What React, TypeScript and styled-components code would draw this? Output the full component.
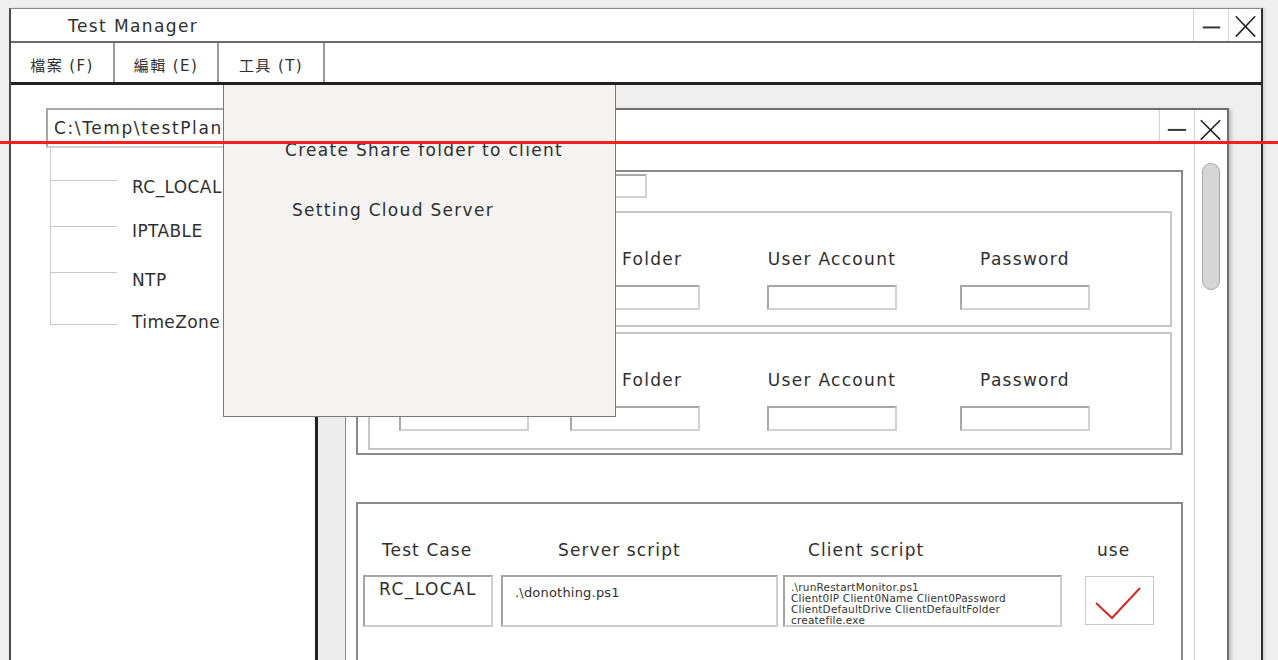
import React from "react";
import styled, { createGlobalStyle } from "styled-components";

const GlobalStyle = createGlobalStyle`
  html, body { margin: 0; padding: 0; background: #efefef; }
  body {
    font-family: "DejaVu Sans", "Noto Sans CJK TC", sans-serif;
    color: #2f2f2f;
  }
  * { box-sizing: border-box; }
`;

const Page = styled.div`
  position: relative;
  width: 1278px;
  height: 660px;
  overflow: hidden;
  padding: 8px 15px 0 9px;
  background: #efefef;
`;

const Window = styled.div`
  display: flex;
  flex-direction: column;
  width: 1254px;
  height: 720px;
  background: #fff;
  border-left: 2px solid #4a4a4a;
  border-right: 2px solid #2e2e2e;
  border-top: 1px solid #8a8a8a;
  box-shadow: 2px 0 3px rgba(0, 0, 0, 0.12);
`;

const TitleBar = styled.div`
  display: flex;
  align-items: stretch;
  height: 34px;
  flex: none;
  border-bottom: 2px solid #6a6a6a;
`;

const Title = styled.div`
  flex: 1;
  display: flex;
  align-items: center;
  padding: 1px 0 0 57px;
  font-size: 17px;
  letter-spacing: 1.4px;
`;

const WinButton = styled.div<{ $w: number }>`
  width: ${(p) => p.$w}px;
  flex: none;
  display: flex;
  border-left: 1px solid #d4d4d4;
  svg { display: block; }
`;

const MenuBar = styled.div`
  display: flex;
  height: 42px;
  flex: none;
  border-bottom: 3px solid #222;
`;

const MenuItem = styled.div<{ $w: number }>`
  width: ${(p) => p.$w}px;
  display: flex;
  align-items: center;
  justify-content: center;
  padding-top: 4px;
  border-right: 2px solid #9a9a9a;
  font-size: 15px;
  letter-spacing: 1.4px;
  white-space: nowrap;
`;

const WindowBody = styled.div`
  flex: 1;
  display: flex;
  min-height: 0;
`;

const LeftPanel = styled.div`
  width: 305px;
  flex: none;
  background: #fff;
  padding: 23px 0 0 35px;
  display: flex;
  flex-direction: column;
`;

const Workspace = styled.div`
  flex: 1;
  background: #efefef;
`;

const PathField = styled.div`
  width: 300px;
  height: 40px;
  border: 2px solid;
  border-color: #a8a8a8 #d0d0d0 #d0d0d0 #a8a8a8;
  padding-left: 6px;
  display: flex;
  align-items: center;
  font-size: 17px;
  letter-spacing: 1.6px;
  white-space: nowrap;
  overflow: hidden;
`;

const Tree = styled.div`
  margin-left: 4px;
  display: flex;
  flex-direction: column;
`;

const TreeLead = styled.div`
  height: 12px;
  border-left: 1px solid #c8c8c8;
`;

const TreeItem = styled.div<{ $top: number; $bottom: number }>`
  display: grid;
  grid-template-columns: 67px auto;
  grid-template-rows: ${(p) => p.$top}px ${(p) => p.$bottom}px;
`;

const StubTop = styled.div`
  grid-row: 1;
  grid-column: 1;
  border-left: 1px solid #c8c8c8;
  border-bottom: 1px solid #c8c8c8;
`;

const StubBottom = styled.div<{ $last?: boolean }>`
  grid-row: 2;
  grid-column: 1;
  border-left: ${(p) => (p.$last ? "none" : "1px solid #c8c8c8")};
`;

const TreeLabel = styled.div<{ $nudge: number }>`
  grid-row: 1 / 3;
  grid-column: 2;
  align-self: start;
  margin-top: ${(p) => p.$nudge}px;
  padding-left: 15px;
  line-height: 20px;
  font-size: 17px;
  letter-spacing: 0.4px;
  white-space: nowrap;
`;

/* ---------- dialog window ---------- */

const Dialog = styled.div`
  position: absolute;
  left: 315px;
  top: 108px;
  width: 914px;
  height: 600px;
  display: flex;
  flex-direction: column;
  background: #fff;
  border-left: 3px solid #222;
  border-top: 2px solid #6e6e6e;
  border-right: 2px solid #6e6e6e;
  box-shadow: 2px 2px 4px rgba(0, 0, 0, 0.25);
`;

const DialogTitle = styled.div`
  display: flex;
  height: 34px;
  flex: none;
  border-bottom: 1px solid #bbb;
`;

const DialogTitleText = styled.div`
  flex: 1;
  display: flex;
  align-items: center;
  padding-left: 20px;
  font-size: 17px;
  letter-spacing: 1.1px;
`;

const DialogBody = styled.div`
  flex: 1;
  display: flex;
  min-height: 0;
`;

const SideStrip = styled.div`
  width: 28px;
  flex: none;
  background: #ececec;
  border-right: 1px solid #8c8c8c;
`;

const Content = styled.div`
  flex: 1;
  padding: 26px 11px 0 10px;
  display: flex;
  flex-direction: column;
`;

const ScrollTrack = styled.div`
  width: 33px;
  flex: none;
  border-left: 1px solid #cfcfcf;
  display: flex;
  justify-content: center;
  padding-top: 19px;
`;

const ScrollThumb = styled.div`
  width: 18px;
  height: 127px;
  border-radius: 9px;
  background: #d6d6d6;
  border: 1.5px solid #a8a8a8;
`;

const GroupBox = styled.div`
  border: 2px solid #8a8a8a;
  padding: 2px 9px 3px 10px;
  display: flex;
  flex-direction: column;
  gap: 5px;
`;

const TopRow = styled.div`
  display: flex;
  align-items: center;
  gap: 12px;
  padding-left: 31px;
  margin-bottom: 8px;
`;

const TopLabel = styled.div`
  width: 106px;
  font-size: 17px;
  letter-spacing: 1.2px;
  white-space: nowrap;
`;

const Field = styled.div<{ $w: number; $h: number }>`
  width: ${(p) => p.$w}px;
  height: ${(p) => p.$h}px;
  flex: none;
  background: #fff;
  border: 2px solid;
  border-color: #a8a8a8 #d2d2d2 #d2d2d2 #a8a8a8;
`;

const SubBox = styled.div<{ $bottom: number }>`
  border: 2px solid #c6c6c6;
  padding: 36px 0 ${(p) => p.$bottom}px 29px;
  display: grid;
  grid-template-columns: 171px 197px 193px 131px;
  grid-template-rows: 20px 25px;
  row-gap: 16px;
`;

const ColLabel = styled.div<{ $offset?: number }>`
  width: 130px;
  display: flex;
  justify-content: ${(p) => (p.$offset !== undefined ? "flex-start" : "center")};
  padding-left: ${(p) => p.$offset ?? 0}px;
  align-items: center;
  font-size: 17px;
  letter-spacing: 1.3px;
  white-space: nowrap;
`;

const CaseBox = styled.div`
  margin-top: 47px;
  flex: 1;
  border: 2px solid #8a8a8a;
  border-bottom: none;
  padding-top: 35px;
`;

const CaseHeader = styled.div`
  display: grid;
  grid-template-columns: 176px 250px 289px auto;
  padding-left: 24px;
  height: 22px;
  align-items: center;
  font-size: 17px;
  letter-spacing: 1.1px;
  white-space: nowrap;
`;

const CaseRow = styled.div`
  display: flex;
  align-items: flex-start;
  padding-left: 5px;
  margin-top: 14px;
`;

const CaseCell = styled.div<{ $w: number; $gap: number; $align?: string }>`
  width: ${(p) => p.$w}px;
  height: 52px;
  margin-right: ${(p) => p.$gap}px;
  flex: none;
  border: 2px solid;
  border-color: #a4a4a4 #cfcfcf #cfcfcf #a4a4a4;
  text-align: ${(p) => p.$align || "left"};
  white-space: nowrap;
  overflow: hidden;
`;

const CaseName = styled.div`
  font-size: 17px;
  letter-spacing: 1.4px;
  line-height: 20px;
  padding-top: 2px;
`;

const ScriptText = styled.div`
  font-size: 13px;
  letter-spacing: 0.2px;
  line-height: 16px;
  padding: 8px 0 0 12px;
`;

const ClientText = styled.div`
  font-size: 10.5px;
  letter-spacing: 0.2px;
  line-height: 11px;
  padding: 5px 0 0 6px;
  color: #333;
`;

const CheckBox = styled.div`
  width: 69px;
  height: 49px;
  flex: none;
  margin-top: 1px;
  border: 1px solid #c8c8c8;
  background: #fff;
  svg { display: block; }
`;

/* ---------- overlays ---------- */

const DropMenu = styled.div`
  position: absolute;
  left: 223px;
  top: 85px;
  width: 393px;
  height: 332px;
  background: #f4f3f2;
  border: 1px solid #7a7a7a;
  border-top: none;
  padding-top: 53px;
  display: flex;
  flex-direction: column;
  gap: 36px;
`;

const DropItem = styled.div<{ $indent: number }>`
  padding-left: ${(p) => p.$indent}px;
  font-size: 17px;
  line-height: 24px;
  letter-spacing: 1.3px;
  white-space: nowrap;
`;

const GuideLine = styled.div`
  position: absolute;
  left: 0;
  top: 141px;
  width: 100%;
  height: 3px;
  background: #ff1d1d;
`;

const MinIcon = ({ w, h, x1, x2, y }: { w: number; h: number; x1: number; x2: number; y: number }) => (
  <svg width={w} height={h} viewBox={`0 0 ${w} ${h}`}>
    <line x1={x1} y1={y} x2={x2} y2={y} stroke="#333" strokeWidth="2" />
  </svg>
);

const CloseIcon = ({ w, h, x1, x2, y1, y2 }: { w: number; h: number; x1: number; x2: number; y1: number; y2: number }) => (
  <svg width={w} height={h} viewBox={`0 0 ${w} ${h}`}>
    <line x1={x1} y1={y1} x2={x2} y2={y2} stroke="#222" strokeWidth="1.6" />
    <line x1={x2} y1={y1} x2={x1} y2={y2} stroke="#222" strokeWidth="1.6" />
  </svg>
);

const treeItems = [
  { label: "RC_LOCAL", top: 21, bottom: 23, nudge: 17 },
  { label: "IPTABLE", top: 23, bottom: 23, nudge: 17 },
  { label: "NTP", top: 23, bottom: 26, nudge: 20 },
  { label: "TimeZone", top: 26, bottom: 10, nudge: 13 },
];

const shareCols: { label: string; offset?: number }[] = [
  { label: "Client IP" },
  { label: "Folder", offset: 52 },
  { label: "User Account" },
  { label: "Password" },
];

export default function App() {
  return (
    <>
      <GlobalStyle />
      <Page>
        <Window>
          <TitleBar>
            <Title>Test Manager</Title>
            <WinButton $w={35}>
              <MinIcon w={35} h={32} x1={9} x2={27} y={18.5} />
            </WinButton>
            <WinButton $w={33}>
              <CloseIcon w={33} h={32} x1={7} x2={27} y1={7} y2={28} />
            </WinButton>
          </TitleBar>
          <MenuBar>
            <MenuItem $w={104}>檔案 (F)</MenuItem>
            <MenuItem $w={104}>編輯 (E)</MenuItem>
            <MenuItem $w={106}>工具 (T)</MenuItem>
          </MenuBar>
          <WindowBody>
            <LeftPanel>
              <PathField>{"C:\\Temp\\testPlan.xml"}</PathField>
              <Tree>
                <TreeLead />
                {treeItems.map((t, i) => (
                  <TreeItem key={t.label} $top={t.top} $bottom={t.bottom}>
                    <StubTop />
                    <StubBottom $last={i === treeItems.length - 1} />
                    <TreeLabel $nudge={t.nudge}>{t.label}</TreeLabel>
                  </TreeItem>
                ))}
              </Tree>
            </LeftPanel>
            <Workspace />
          </WindowBody>
        </Window>

        <Dialog>
          <DialogTitle>
            <DialogTitleText>Setting Cloud Server</DialogTitleText>
            <WinButton $w={35}>
              <MinIcon w={35} h={33} x1={8} x2={27} y={20} />
            </WinButton>
            <WinButton $w={33}>
              <CloseIcon w={33} h={33} x1={6} x2={26} y1={10} y2={30} />
            </WinButton>
          </DialogTitle>
          <DialogBody>
            <SideStrip />
            <Content>
              <GroupBox>
                <TopRow>
                  <TopLabel>Server IP</TopLabel>
                  <Field $w={130} $h={24} />
                </TopRow>
                {[15, 17].map((pb, b) => (
                  <SubBox key={b} $bottom={pb}>
                    {shareCols.map((c) => (
                      <ColLabel key={c.label} $offset={c.offset}>
                        {c.label}
                      </ColLabel>
                    ))}
                    {shareCols.map((c) => (
                      <Field key={c.label} $w={130} $h={25} />
                    ))}
                  </SubBox>
                ))}
              </GroupBox>
              <CaseBox>
                <CaseHeader>
                  <span>Test Case</span>
                  <span>Server script</span>
                  <span>Client script</span>
                  <span>use</span>
                </CaseHeader>
                <CaseRow>
                  <CaseCell $w={130} $gap={8} $align="center">
                    <CaseName>RC_LOCAL</CaseName>
                  </CaseCell>
                  <CaseCell $w={277} $gap={5}>
                    <ScriptText>{".\\donothing.ps1"}</ScriptText>
                  </CaseCell>
                  <CaseCell $w={279} $gap={23}>
                    <ClientText>
                      {".\\runRestartMonitor.ps1"}
                      <br />
                      Client0IP Client0Name Client0Password
                      <br />
                      ClientDefaultDrive ClientDefaultFolder
                      <br />
                      createfile.exe
                    </ClientText>
                  </CaseCell>
                  <CheckBox>
                    <svg width="67" height="47" viewBox="0 0 67 47">
                      <polyline
                        points="10,26 26,41 54,11"
                        fill="none"
                        stroke="#d42a2a"
                        strokeWidth="2"
                      />
                    </svg>
                  </CheckBox>
                </CaseRow>
              </CaseBox>
            </Content>
            <ScrollTrack>
              <ScrollThumb />
            </ScrollTrack>
          </DialogBody>
        </Dialog>

        <DropMenu>
          <DropItem $indent={61}>Create Share folder to client</DropItem>
          <DropItem $indent={68}>Setting Cloud Server</DropItem>
        </DropMenu>

        <GuideLine />
      </Page>
    </>
  );
}
